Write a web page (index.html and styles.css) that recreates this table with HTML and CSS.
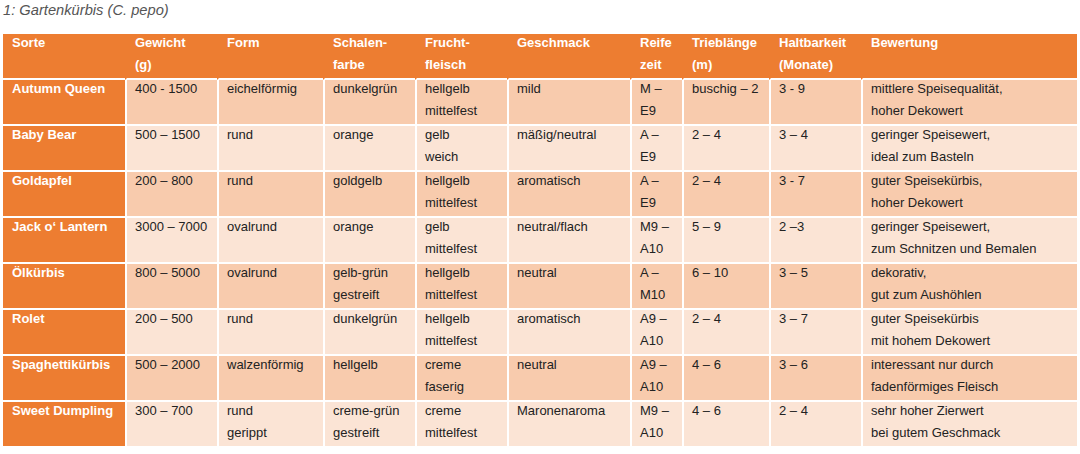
FILE: index.html
```html
<!DOCTYPE html>
<html lang="de">
<head>
<meta charset="utf-8">
<title>Gartenkürbis</title>
<link rel="stylesheet" href="styles.css">
</head>
<body>
<p class="caption">1: Gartenkürbis (C. pepo)</p>
<table class="sorten">
  <colgroup>
    <col class="w-sorte"><col class="w-gewicht"><col class="w-form"><col class="w-schale"><col class="w-frucht"><col class="w-geschmack"><col class="w-reife"><col class="w-trieb"><col class="w-halt"><col class="w-bew">
  </colgroup>
  <thead>
    <tr>
      <th><div class="in">Sorte</div></th>
      <th><div class="in">Gewicht<br>(g)</div></th>
      <th><div class="in">Form</div></th>
      <th><div class="in">Schalen-<br>farbe</div></th>
      <th><div class="in">Frucht-<br>fleisch</div></th>
      <th><div class="in">Geschmack</div></th>
      <th><div class="in">Reife<br>zeit</div></th>
      <th><div class="in">Trieblänge<br>(m)</div></th>
      <th><div class="in">Haltbarkeit<br>(Monate)</div></th>
      <th><div class="in">Bewertung</div></th>
    </tr>
  </thead>
  <tbody>
    <tr class="odd">
      <th><div class="in">Autumn Queen</div></th>
      <td><div class="in">400 - 1500</div></td>
      <td><div class="in">eichelförmig</div></td>
      <td><div class="in">dunkelgrün</div></td>
      <td><div class="in">hellgelb<br>mittelfest</div></td>
      <td><div class="in">mild</div></td>
      <td><div class="in">M –<br>E9</div></td>
      <td><div class="in">buschig – 2</div></td>
      <td><div class="in">3 - 9</div></td>
      <td><div class="in">mittlere Speisequalität,<br>hoher Dekowert</div></td>
    </tr>
    <tr class="even">
      <th><div class="in">Baby Bear</div></th>
      <td><div class="in">500 – 1500</div></td>
      <td><div class="in">rund</div></td>
      <td><div class="in">orange</div></td>
      <td><div class="in">gelb<br>weich</div></td>
      <td><div class="in">mäßig/neutral</div></td>
      <td><div class="in">A –<br>E9</div></td>
      <td><div class="in">2 – 4</div></td>
      <td><div class="in">3 – 4</div></td>
      <td><div class="in">geringer Speisewert,<br>ideal zum Basteln</div></td>
    </tr>
    <tr class="odd">
      <th><div class="in">Goldapfel</div></th>
      <td><div class="in">200 – 800</div></td>
      <td><div class="in">rund</div></td>
      <td><div class="in">goldgelb</div></td>
      <td><div class="in">hellgelb<br>mittelfest</div></td>
      <td><div class="in">aromatisch</div></td>
      <td><div class="in">A –<br>E9</div></td>
      <td><div class="in">2 – 4</div></td>
      <td><div class="in">3 - 7</div></td>
      <td><div class="in">guter Speisekürbis,<br>hoher Dekowert</div></td>
    </tr>
    <tr class="even">
      <th><div class="in">Jack o‘ Lantern</div></th>
      <td><div class="in">3000 – 7000</div></td>
      <td><div class="in">ovalrund</div></td>
      <td><div class="in">orange</div></td>
      <td><div class="in">gelb<br>mittelfest</div></td>
      <td><div class="in">neutral/flach</div></td>
      <td><div class="in">M9 –<br>A10</div></td>
      <td><div class="in">5 – 9</div></td>
      <td><div class="in">2 –3</div></td>
      <td><div class="in">geringer Speisewert,<br>zum Schnitzen und Bemalen</div></td>
    </tr>
    <tr class="odd">
      <th><div class="in">Ölkürbis</div></th>
      <td><div class="in">800 – 5000</div></td>
      <td><div class="in">ovalrund</div></td>
      <td><div class="in">gelb-grün<br>gestreift</div></td>
      <td><div class="in">hellgelb<br>mittelfest</div></td>
      <td><div class="in">neutral</div></td>
      <td><div class="in">A –<br>M10</div></td>
      <td><div class="in">6 – 10</div></td>
      <td><div class="in">3 – 5</div></td>
      <td><div class="in">dekorativ,<br>gut zum Aushöhlen</div></td>
    </tr>
    <tr class="even">
      <th><div class="in">Rolet</div></th>
      <td><div class="in">200 – 500</div></td>
      <td><div class="in">rund</div></td>
      <td><div class="in">dunkelgrün</div></td>
      <td><div class="in">hellgelb<br>mittelfest</div></td>
      <td><div class="in">aromatisch</div></td>
      <td><div class="in">A9 –<br>A10</div></td>
      <td><div class="in">2 – 4</div></td>
      <td><div class="in">3 – 7</div></td>
      <td><div class="in">guter Speisekürbis<br>mit hohem Dekowert</div></td>
    </tr>
    <tr class="odd">
      <th><div class="in">Spaghettikürbis</div></th>
      <td><div class="in">500 – 2000</div></td>
      <td><div class="in">walzenförmig</div></td>
      <td><div class="in">hellgelb</div></td>
      <td><div class="in">creme<br>faserig</div></td>
      <td><div class="in">neutral</div></td>
      <td><div class="in">A9 –<br>A10</div></td>
      <td><div class="in">4 – 6</div></td>
      <td><div class="in">3 – 6</div></td>
      <td><div class="in">interessant nur durch<br>fadenförmiges Fleisch</div></td>
    </tr>
    <tr class="even">
      <th><div class="in">Sweet Dumpling</div></th>
      <td><div class="in">300 – 700</div></td>
      <td><div class="in">rund<br>gerippt</div></td>
      <td><div class="in">creme-grün<br>gestreift</div></td>
      <td><div class="in">creme<br>mittelfest</div></td>
      <td><div class="in">Maronenaroma</div></td>
      <td><div class="in">M9 –<br>A10</div></td>
      <td><div class="in">4 – 6</div></td>
      <td><div class="in">2 – 4</div></td>
      <td><div class="in">sehr hoher Zierwert<br>bei gutem Geschmack</div></td>
    </tr>
  </tbody>
</table>
</body>
</html>
```

FILE: styles.css
```css
html, body {
  margin: 0;
  padding: 0;
  background: #ffffff;
}

body {
  font-family: "Liberation Sans", Arial, sans-serif;
  font-size: 13px;
  color: #222222;
}

.caption {
  margin: 2px 0 0 3px;
  font-size: 14.7px;
  font-style: italic;
  color: #555555;
  line-height: 17px;
}

.sorten {
  margin: 15px 0 0 3px;
  width: 1074px;
  table-layout: fixed;
  border-collapse: separate;
  border-spacing: 0;
  font-size: 13px;
  line-height: 22px;
}

.w-sorte { width: 122px; }
.w-gewicht { width: 92px; }
.w-form { width: 106px; }
.w-schale { width: 92px; }
.w-frucht { width: 92px; }
.w-geschmack { width: 123px; }
.w-reife { width: 52px; }
.w-trieb { width: 87px; }
.w-halt { width: 92px; }
.w-bew { width: 216px; }

.sorten th,
.sorten td {
  height: 44px;
  padding: 0 0 0 8px;
  vertical-align: top;
  text-align: left;
  white-space: nowrap;
  overflow: hidden;
  border-bottom: 2px solid #ffffff;
  border-left: 2px solid #ffffff;
}

.sorten thead th {
  background: #ed7d31;
  color: #ffffff;
  font-weight: bold;
  border-left-color: #ed7d31;
}

.sorten th:first-child {
  border-left: 0;
  padding-left: 9px;
}

.sorten tbody th {
  background: #ed7d31;
  color: #ffffff;
  font-weight: bold;
}

.sorten tr.odd td {
  background: #f8cbad;
}

.sorten tr.even td {
  background: #fbe4d5;
}

.in {
  margin-top: -2px;
}
```
